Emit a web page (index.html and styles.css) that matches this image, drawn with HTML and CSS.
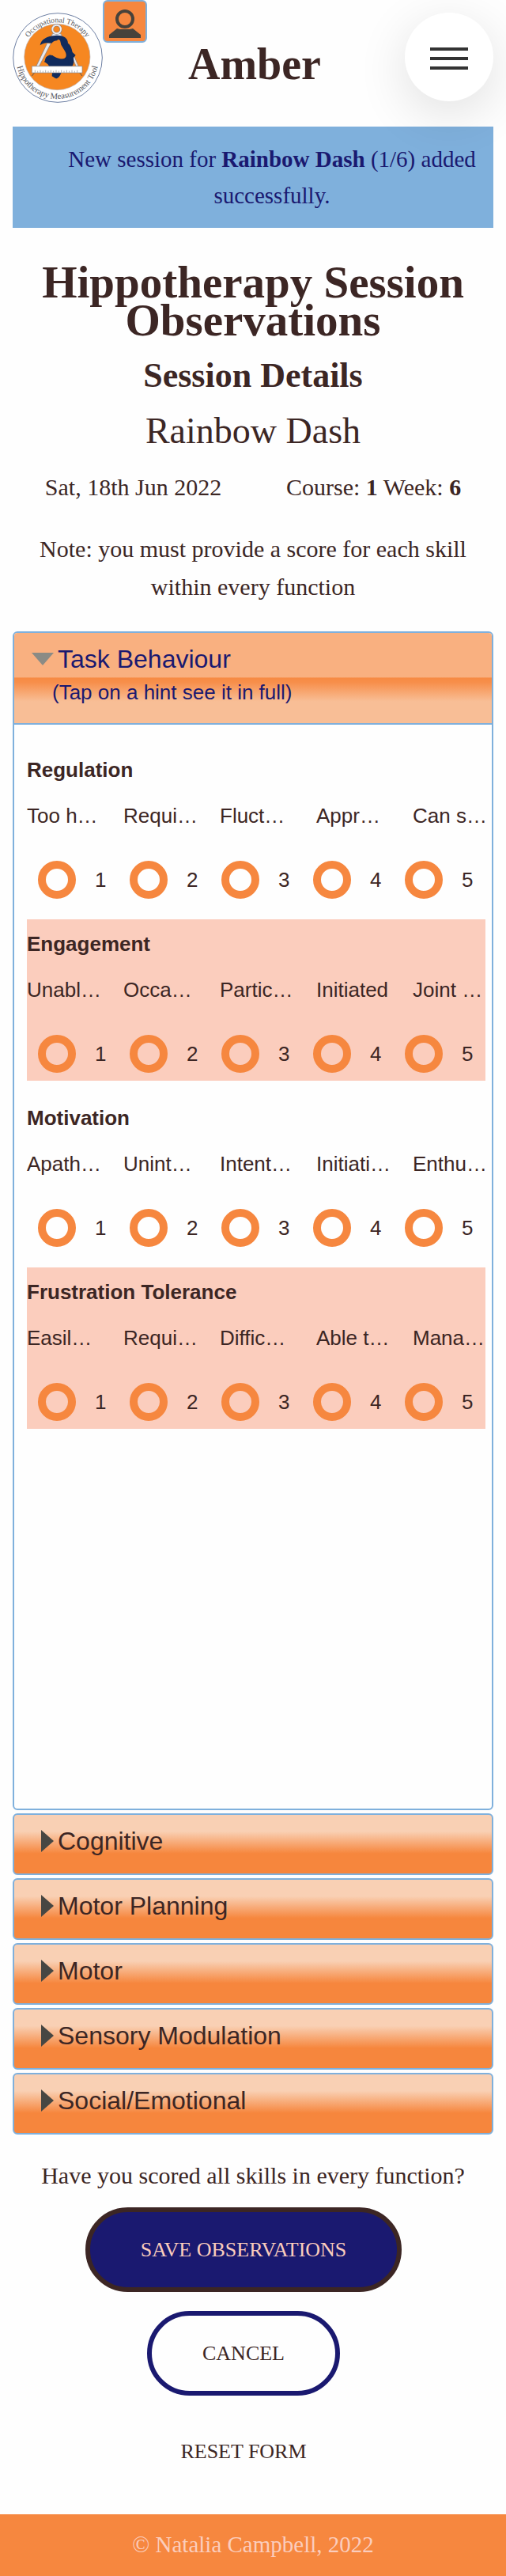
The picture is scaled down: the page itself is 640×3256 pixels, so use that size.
FILE: index.html
```html
<!DOCTYPE html>
<html lang="en">
<head>
<meta charset="utf-8">
<meta name="viewport" content="width=device-width, initial-scale=1">
<title>Hippotherapy Session Observations</title>
<link rel="stylesheet" href="styles.css">
</head>
<body>
<header class="site-header">
  <a class="logo" href="#" aria-label="Home">
    <svg viewBox="48 48 342 342" width="114" height="114">
      <defs>
        <path id="arc-top" d="M85 218A133 133 0 0 1 351 218"/>
        <path id="arc-bottom" d="M61 218A157 157 0 0 0 375 218"/>
      </defs>
      <circle cx="219" cy="219" r="169" fill="#fff" stroke="#6d7fa3" stroke-width="3"/>
      <circle cx="217" cy="216" r="125" fill="#f68721" stroke="#b9b3b8" stroke-width="2"/>
      <g class="logo-text">
        <text font-size="29" text-anchor="middle"><textPath href="#arc-top" startOffset="50%">Occupational Therapy</textPath></text>
        <text font-size="32" text-anchor="middle"><textPath href="#arc-bottom" startOffset="50%">Hippotherapy Measurement Tool</textPath></text>
      </g>
      <path d="M195 137Q197 126 207 126H223Q233 126 235 137Z" fill="#e9e9ee" stroke="#88888f" stroke-width="2"/>
      <circle cx="215" cy="111" r="16" fill="none" stroke="#77777f" stroke-width="9"/>
      <circle cx="215" cy="111" r="16" fill="none" stroke="#ececf0" stroke-width="6"/>
      <path d="M270 210L279 208L298 252H289Z" fill="#e9e9ee" stroke="#77777f" stroke-width="2"/>
      <path d="M152 172C156 148 180 137 208 135C238 132 257 142 258 164C267 168 272 184 275 198L287 209L279 219C281 233 280 245 273 252H187C183 242 177 240 169 235C173 226 172 218 179 214C186 207 194 208 199 214L182 192L196 164C182 160 165 163 152 172Z M198 276H232C229 285 225 294 215 298C209 298 205 292 197 289Z" fill="#112b5c"/>
      <path d="M216 154L221 149L228 153L232 170L243 188C254 203 254 219 242 223C227 226 207 216 199 210L178 214L166 204L184 168L196 164C202 157 209 154 216 154Z" fill="#f68721"/>
      <path d="M179 164L193 165L148 252L137 252Z" fill="#e9e9ee" stroke="#77777f" stroke-width="2"/>
      <path d="M169 235C173 226 172 218 179 214C186 207 194 208 199 211C207 216 214 224 222 224C236 226 248 222 254 212L262 240L255 252H187C183 242 177 240 169 235Z" fill="#112b5c"/>
      <path d="M121 251H312V276H121Z" fill="#fff" stroke="#85858c" stroke-width="2"/>
      <path d="M133 275v-9m10 9v-6m10 6v-9m10 9v-6m10 6v-9m10 9v-6m10 6v-9m10 9v-6m10 6v-9m10 9v-6m10 6v-9m10 9v-6m10 6v-9m10 9v-6m10 6v-9m10 9v-6m10 6v-9" stroke="#85858c" stroke-width="2"/>
      <path d="M130 277L121 288M303 277L312 288" stroke="#555" stroke-width="3"/>
    </svg>
  </a>
  <a class="profile" href="#" aria-label="Profile">
    <svg viewBox="0 0 52 50" width="52" height="50">
      <circle cx="26" cy="22" r="10" fill="none" stroke="#47423b" stroke-width="4"/>
      <path d="M6 46V42L16 34L20 35H32L36 34L46 42V46Z" fill="#47423b"/>
    </svg>
  </a>
  <p class="user-name">Amber</p>
  <button class="menu" type="button" aria-label="Menu"><span class="bar"></span><span class="bar"></span><span class="bar"></span></button>
</header>

<main class="page">
  <p class="alert">New session for <strong>Rainbow Dash</strong> (1/6) added successfully.</p>
  <h1>Hippotherapy Session Observations</h1>
  <h2>Session Details</h2>
  <p class="rider">Rainbow Dash</p>
  <div class="details">
    <span>Sat, 18th Jun 2022</span>
    <span>Course: <strong>1</strong> Week: <strong>6</strong></span>
  </div>
  <p class="note">Note: you must provide a score for each skill within every function</p>

  <form class="form">
    <section class="function open">
      <button class="function-head" type="button" aria-expanded="true">
        <span class="function-name"><svg class="arrow" viewBox="0 0 30 30" width="30" height="30"><path d="M0 7H28L14 23Z" fill="#8b8b85"/></svg>Task Behaviour</span>
        <span class="function-hint">(Tap on a hint see it in full)</span>
      </button>
      <div class="skills">
        <fieldset class="skill">
          <legend>Regulation</legend>
          <div class="hints"><span>Too h…</span><span>Requi…</span><span>Fluct…</span><span>Appr…</span><span>Can s…</span></div>
          <div class="scores">
            <label><input type="radio" name="regulation" value="1">1</label>
            <label><input type="radio" name="regulation" value="2">2</label>
            <label><input type="radio" name="regulation" value="3">3</label>
            <label><input type="radio" name="regulation" value="4">4</label>
            <label><input type="radio" name="regulation" value="5">5</label>
          </div>
        </fieldset>
        <fieldset class="skill">
          <legend>Engagement</legend>
          <div class="hints"><span>Unabl…</span><span>Occa…</span><span>Partic…</span><span>Initiated</span><span>Joint …</span></div>
          <div class="scores">
            <label><input type="radio" name="engagement" value="1">1</label>
            <label><input type="radio" name="engagement" value="2">2</label>
            <label><input type="radio" name="engagement" value="3">3</label>
            <label><input type="radio" name="engagement" value="4">4</label>
            <label><input type="radio" name="engagement" value="5">5</label>
          </div>
        </fieldset>
        <fieldset class="skill">
          <legend>Motivation</legend>
          <div class="hints"><span>Apath…</span><span>Unint…</span><span>Intent…</span><span>Initiati…</span><span>Enthu…</span></div>
          <div class="scores">
            <label><input type="radio" name="motivation" value="1">1</label>
            <label><input type="radio" name="motivation" value="2">2</label>
            <label><input type="radio" name="motivation" value="3">3</label>
            <label><input type="radio" name="motivation" value="4">4</label>
            <label><input type="radio" name="motivation" value="5">5</label>
          </div>
        </fieldset>
        <fieldset class="skill">
          <legend>Frustration Tolerance</legend>
          <div class="hints"><span>Easil…</span><span>Requi…</span><span>Diffic…</span><span>Able t…</span><span>Mana…</span></div>
          <div class="scores">
            <label><input type="radio" name="frustration" value="1">1</label>
            <label><input type="radio" name="frustration" value="2">2</label>
            <label><input type="radio" name="frustration" value="3">3</label>
            <label><input type="radio" name="frustration" value="4">4</label>
            <label><input type="radio" name="frustration" value="5">5</label>
          </div>
        </fieldset>
      </div>
    </section>
    <button class="function closed" type="button" aria-expanded="false"><svg class="arrow" viewBox="0 0 30 30" width="30" height="30"><path d="M12 1L28 15L12 29Z" fill="#474743"/></svg>Cognitive</button>
    <button class="function closed" type="button" aria-expanded="false"><svg class="arrow" viewBox="0 0 30 30" width="30" height="30"><path d="M12 1L28 15L12 29Z" fill="#474743"/></svg>Motor Planning</button>
    <button class="function closed" type="button" aria-expanded="false"><svg class="arrow" viewBox="0 0 30 30" width="30" height="30"><path d="M12 1L28 15L12 29Z" fill="#474743"/></svg>Motor</button>
    <button class="function closed" type="button" aria-expanded="false"><svg class="arrow" viewBox="0 0 30 30" width="30" height="30"><path d="M12 1L28 15L12 29Z" fill="#474743"/></svg>Sensory Modulation</button>
    <button class="function closed" type="button" aria-expanded="false"><svg class="arrow" viewBox="0 0 30 30" width="30" height="30"><path d="M12 1L28 15L12 29Z" fill="#474743"/></svg>Social/Emotional</button>

    <p class="question">Have you scored all skills in every function?</p>
    <div class="actions">
      <button class="action save" type="submit">SAVE OBSERVATIONS</button>
      <button class="action cancel" type="button">CANCEL</button>
      <button class="action reset" type="reset">RESET FORM</button>
    </div>
  </form>
</main>

<footer class="site-footer">© Natalia Campbell, 2022</footer>
</body>
</html>
```
FILE: styles.css
```css
* { box-sizing: border-box; }

body {
  margin: 0;
  background: #fefefe;
  color: #3c2624;
  font-family: "Liberation Serif", serif;
  font-size: 30px;
  line-height: 48px;
}

h1, h2, p { margin: 0; }
button { font: inherit; color: inherit; cursor: pointer; }

.site-header {
  display: flex;
  align-items: flex-start;
  height: 160px;
  padding: 0 16px;
}
.logo { display: block; padding-top: 16px; }
.logo svg, .profile svg { display: block; }
.logo-text { fill: #55555a; }
.profile {
  background: #f6873f;
  border: 2px solid #7fb0dc;
  border-radius: 6px;
}
.user-name {
  flex: 1;
  padding: 57px 52px 0;
  font-size: 56px;
  font-weight: bold;
}
.menu {
  display: flex;
  flex-direction: column;
  align-items: center;
  justify-content: center;
  gap: 8px;
  width: 112px;
  height: 112px;
  margin-top: 16px;
  padding: 4px 0 0;
  border: 0;
  border-radius: 50%;
  background: #fff;
  box-shadow: 0 16px 64px rgba(0, 0, 0, 0.12);
}
.bar { width: 48px; height: 4px; background: #333; }

.page { padding: 0 16px; text-align: center; }
.alert {
  padding: 18px 16px 18px 64px;
  background: #7fb0dc;
  color: #1a1970;
  font-size: 29px;
  line-height: 46px;
}
h1 { padding-top: 45px; font-size: 57px; line-height: 48px; }
h2 { padding-top: 14px; font-size: 44px; line-height: 64px; }
.rider { font-size: 46px; line-height: 76px; }
.details { display: flex; justify-content: space-around; padding-top: 9px; }
.note { padding: 30px 20px 32px; }

.function {
  width: 100%;
  border: 2px solid #7fb0dc;
  border-radius: 6px;
  font-family: "Liberation Sans", sans-serif;
  text-align: left;
}
.form { display: flex; flex-direction: column; gap: 4px; }
.open { overflow: hidden; }
.function-head {
  display: block;
  width: 100%;
  padding: 13px 22px 17px;
  border: 0;
  border-bottom: 2px solid #7fb0dc;
  background: linear-gradient(#f9b080 49%, #f78a43 50%, #f78f4b 55%, #f8be96 76%);
  color: #1a1970;
  text-align: left;
}
.function-name {
  display: flex;
  align-items: center;
  gap: 3px;
  font-size: 32px;
  line-height: 40px;
}
.function-hint { display: block; padding: 0 26px; font-size: 26px; line-height: 44px; }

.skills {
  display: grid;
  gap: 16px;
  padding: 26px 8px 480px 16px;
  font-size: 26px;
}
.skill {
  display: grid;
  gap: 10px;
  min-width: 0;
  margin: 0;
  padding: 7px 0 10px;
  border: 0;
}
.skill:nth-child(even) { background: #fbcdbd; }
.skill legend { float: left; padding: 0; font-weight: bold; }
.hints { display: grid; grid-template-columns: repeat(5, minmax(0, 1fr)); gap: 30px; }
.hints span { white-space: nowrap; }
.scores { display: grid; grid-template-columns: repeat(5, minmax(0, 1fr)); padding-top: 23px; }
.scores label { display: flex; align-items: center; gap: 24px; padding-left: 14px; }
.scores input {
  appearance: none;
  width: 48px;
  height: 48px;
  margin: 0;
  border: 10px solid #f6873f;
  border-radius: 50%;
}

.closed {
  display: flex;
  align-items: center;
  gap: 3px;
  height: 78px;
  padding: 0 22px 8px;
  background: linear-gradient(#f9d0b4 28%, #f6863d 66%);
  font-size: 32px;
}

.question { padding-top: 24px; }
.actions {
  display: flex;
  flex-direction: column;
  align-items: center;
  gap: 24px;
  padding: 12px 24px 32px 0;
}
.action {
  min-height: 107px;
  padding: 0 64px;
  border: 6px solid transparent;
  border-radius: 54px;
  background: none;
  font-size: 26px;
}
.save { background: #1a1970; border-color: #3c2624; color: #fbcdbd; }
.cancel { border-color: #1a1970; }
.reset { min-height: 94px; }

.site-footer {
  padding: 14px 16px 16px;
  background: #f6873f;
  color: #fbcdbd;
  font-size: 29px;
  text-align: center;
}
```
